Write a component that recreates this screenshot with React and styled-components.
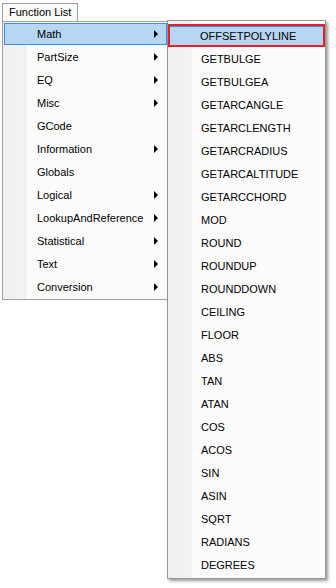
import React from 'react';
import styled, { createGlobalStyle } from 'styled-components';

const GlobalStyle = createGlobalStyle`
  html, body {
    margin: 0;
    padding: 0;
    background: #fff;
  }
  body {
    font-family: "Liberation Sans", Arial, sans-serif;
    font-size: 11px;
    color: #000;
  }
`;

const Page = styled.div`
  width: 336px;
  height: 588px;
  overflow: hidden;
`;

const TabBar = styled.div`
  display: flex;
  padding: 3px 0 0 2px;
`;

const Tab = styled.div`
  box-sizing: border-box;
  width: 76px;
  height: 18px;
  padding-left: 6px;
  border: 1px solid #a0a0a0;
  border-bottom: none;
  background: #fbfbfb;
  line-height: 17px;
  white-space: nowrap;
`;

const MenuRow = styled.div`
  display: flex;
  align-items: flex-start;
  padding-left: 2px;
`;

const Menu = styled.div`
  box-sizing: border-box;
  display: flex;
  flex-direction: column;
  gap: ${p => p.gap}px;
  width: ${p => p.width}px;
  margin-top: ${p => p.offset}px;
  margin-left: ${p => (p.sub ? -1 : 0)}px;
  padding: ${p => p.pad};
  border: 1px solid ${p => (p.sub ? '#979797' : '#a0a0a0')};
  background: linear-gradient(
    90deg,
    #f0f0f0 0,
    #f3f3f3 21px,
    #ececec 23px,
    #fcfcfc 24px,
    #fcfcfc 100%
  );
  box-shadow: ${p => (p.sub ? '2px 2px 3px rgba(0, 0, 0, 0.4)' : 'none')};
`;

const Item = styled.div`
  box-sizing: border-box;
  display: flex;
  align-items: center;
  justify-content: space-between;
  height: ${p => p.h}px;
  padding: 0 8px 0 ${p => p.indent}px;
  border: 1px solid ${p => (p.active ? '#3c8fe0' : 'transparent')};
  background: ${p => (p.active ? '#b6d6f4' : 'transparent')};
  white-space: nowrap;
`;

const Marked = styled.div`
  box-sizing: border-box;
  height: 23px;
  border: 2px solid #e0222b;
  display: flex;
`;

const MarkedInner = styled.div`
  flex: 1;
  display: flex;
  align-items: center;
  padding-left: 30px;
  border-top: 1px solid #3c8fe0;
  background: #b6d6f4;
  white-space: nowrap;
`;

const Arrow = styled.span`
  width: 0;
  height: 0;
  border-top: 4px solid transparent;
  border-bottom: 4px solid transparent;
  border-left: 4px solid #000;
`;

const mainItems = [
  ['Math', true],
  ['PartSize', true],
  ['EQ', true],
  ['Misc', true],
  ['GCode', false],
  ['Information', true],
  ['Globals', false],
  ['Logical', true],
  ['LookupAndReference', true],
  ['Statistical', true],
  ['Text', true],
  ['Conversion', true],
];

const mathItems = [
  'GETBULGE', 'GETBULGEA', 'GETARCANGLE', 'GETARCLENGTH', 'GETARCRADIUS',
  'GETARCALTITUDE', 'GETARCCHORD', 'MOD', 'ROUND', 'ROUNDUP', 'ROUNDDOWN',
  'CEILING', 'FLOOR', 'ABS', 'TAN', 'ATAN', 'COS', 'ACOS', 'SIN', 'ASIN',
  'SQRT', 'RADIANS', 'DEGREES',
];

const App = () => {
  return (
    <Page>
      <GlobalStyle />
      <TabBar>
        <Tab>Function List</Tab>
      </TabBar>
      <MenuRow>
        <Menu width={166} gap={1} offset={0} pad="1px 0 1px 1px">
          {mainItems.map(([name, sub], i) => (
            <Item key={name} h={22} indent={32} active={i === 0}>
              <span>{name}</span>
              {sub && <Arrow />}
            </Item>
          ))}
        </Menu>
        <Menu sub width={159} gap={0} offset={-1} pad="3px 0 2px 0">
          <Marked>
            <MarkedInner>OFFSETPOLYLINE</MarkedInner>
          </Marked>
          {mathItems.map(name => (
            <Item key={name} h={23} indent={32}>
              <span>{name}</span>
            </Item>
          ))}
        </Menu>
      </MenuRow>
    </Page>
  );
};

export default App;
